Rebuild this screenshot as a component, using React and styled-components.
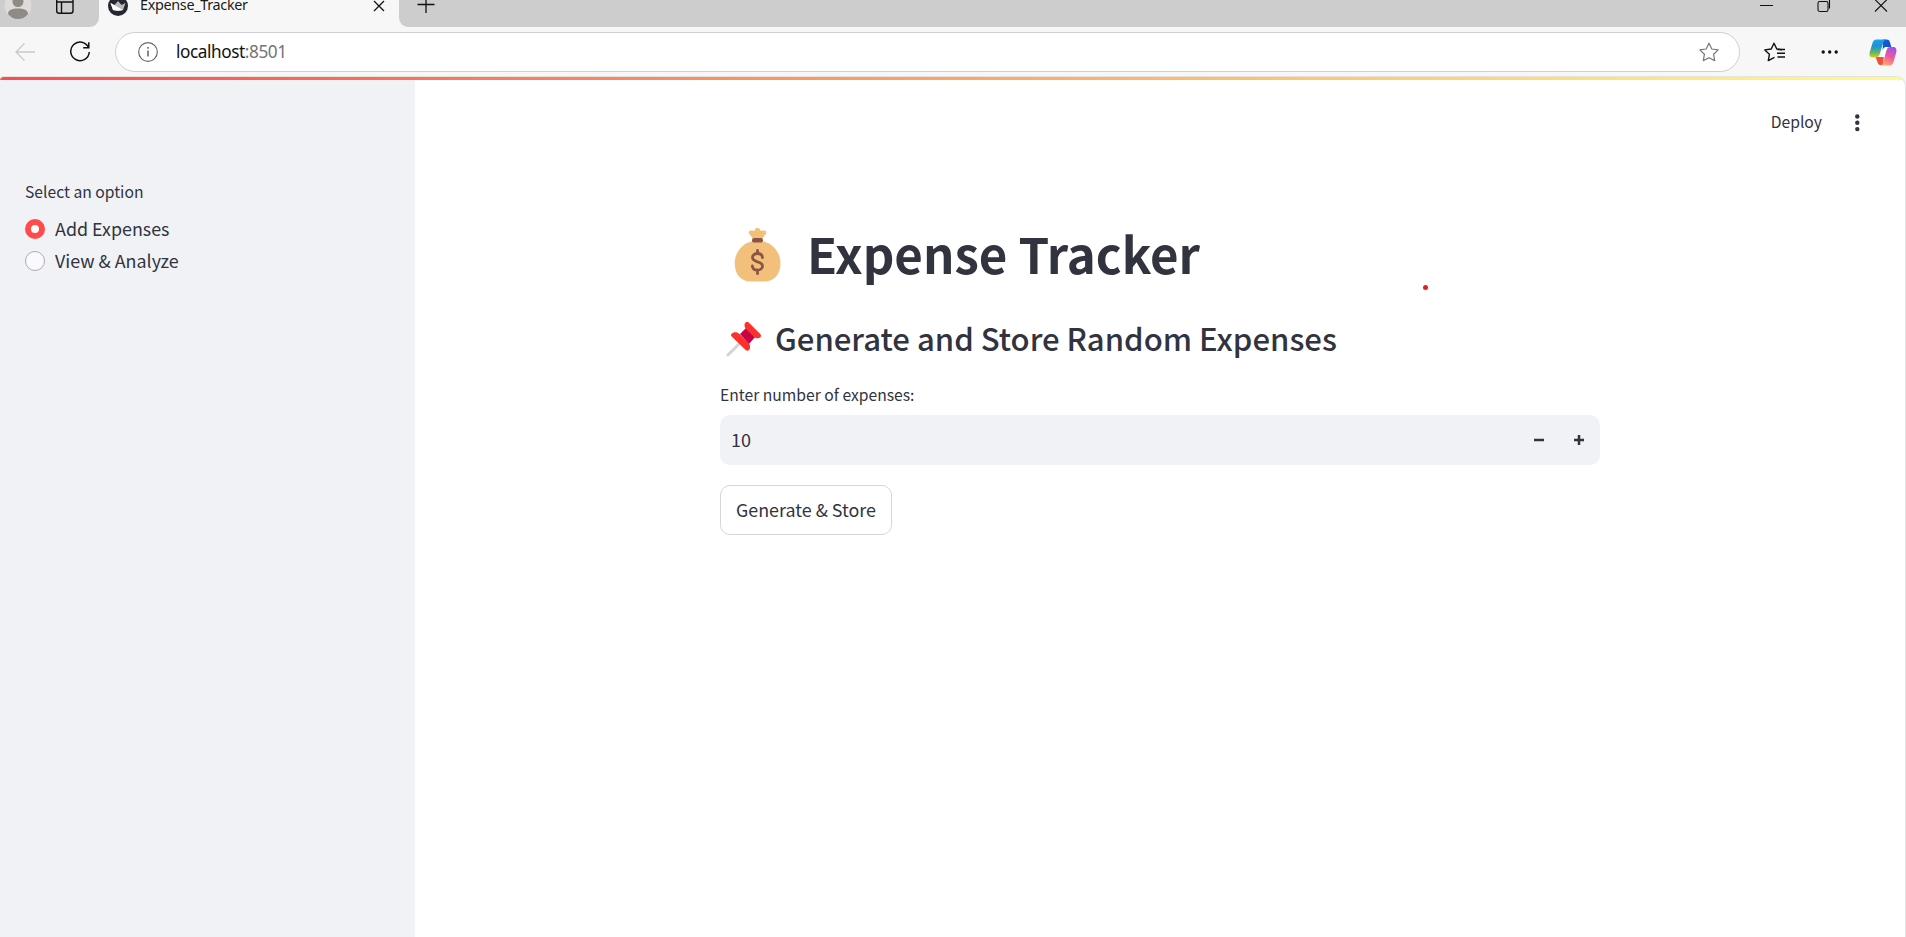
import React from 'react';
import styled, { createGlobalStyle } from 'styled-components';

const Global = createGlobalStyle`
  *, *::before, *::after { box-sizing: border-box; }
  body { margin: 0; background: #f7f7f7; overflow: hidden; }
  svg { display: block; flex: none; }
  h1, h2, p { margin: 0; }
  button { font: inherit; color: inherit; background: none; border: 0; padding: 0; }
`;

const ink = '#31333f';

const Window = styled.div`
  height: 937px;
  display: flex;
  flex-direction: column;
  color: ${ink};
  font-family: 'Noto Sans CJK SC', 'Open Sans', sans-serif;
`;

const TabStrip = styled.div`
  height: 27px;
  display: flex;
  overflow: hidden;
  color: #111;
`;

const StripStart = styled.div`
  width: 99px;
  background: #cdcdcd;
  border-bottom-right-radius: 9px;
  display: flex;
  align-items: flex-start;
`;

const Tab = styled.div`
  width: 300px;
  padding: 0 14px 0 9px;
  display: flex;
  align-items: flex-start;
`;

const TabTitle = styled.span`
  flex: 1;
  margin-left: 12px;
  margin-top: -8px;
  font: 14.4px/26px 'Noto Sans', sans-serif;
  letter-spacing: -0.32px;
  color: #1b1b1b;
`;

const StripEnd = styled.div`
  flex: 1;
  background: #cdcdcd;
  border-bottom-left-radius: 9px;
  padding: 0 18px 0 18px;
  display: flex;
  justify-content: space-between;
`;

const WindowControls = styled.div`
  display: flex;
  gap: 43.5px;
`;

const Toolbar = styled.div`
  height: 50px;
  padding: 5px 8px 5px 14px;
  display: flex;
  align-items: center;
`;

const AddressBar = styled.div`
  width: 1625px;
  height: 40px;
  margin: 0 24px 0 24px;
  padding: 0 20px 0 22px;
  border: 1px solid #cfcfcf;
  border-radius: 20px;
  background: #fff;
  display: flex;
  align-items: center;
`;

const Url = styled.span`
  flex: 1;
  margin-left: 18px;
  font: 17.2px/24px 'Noto Sans', sans-serif;
  letter-spacing: -0.42px;
  color: #111;
`;

const Port = styled.span`
  color: #757575;
`;

const ToolbarGroup = styled.div`
  display: flex;
  align-items: center;
  gap: ${(p) => p.$gap}px;
`;

const Viewport = styled.div`
  flex: 1;
  margin-right: 1px;
  border-radius: 4px 9px 0 0;
  overflow: hidden;
  background: #fff;
  box-shadow: 0 0 0 1px #e3e3e3;
  display: flex;
  flex-direction: column;
`;

const Decoration = styled.div`
  height: 3px;
  background: linear-gradient(90deg, #ff4b4b, #fffd80);
`;

const Page = styled.div`
  flex: 1;
  display: flex;
`;

const Sidebar = styled.aside`
  width: 415px;
  padding: 99px 25px 0;
  background: #f0f2f6;
`;

const Label = styled.div`
  font-size: 15.68px;
  line-height: 26px;
`;

const RadioList = styled.div`
  margin-top: 8px;
  display: flex;
  flex-direction: column;
`;

const RadioRow = styled.label`
  height: 32px;
  display: flex;
  align-items: center;
  gap: 10px;
  font-size: 17.9px;
  line-height: 30px;
`;

const RadioText = styled.span`
  height: 32px;
`;

const RadioDot = styled.span`
  width: 20px;
  height: 20px;
  border-radius: 50%;
  background: ${(p) => (p.$checked ? '#fff' : '#fafafc')};
  border: ${(p) => (p.$checked ? '6px solid #ff4b4b' : '1px solid #a9abb2')};
`;

const Main = styled.main`
  flex: 1;
  display: flex;
  flex-direction: column;
`;

const AppHeader = styled.header`
  height: 85px;
  padding: 0 45px 0 0;
  display: flex;
  justify-content: flex-end;
  align-items: center;
  gap: 32px;
  font-size: 15.7px;
`;

const DeployLink = styled.span`
  padding-bottom: 2px;
`;

const Content = styled.section`
  width: 880px;
  margin-left: 305px;
  margin-top: 54px;
`;

const Title = styled.h1`
  height: 72px;
  display: flex;
  align-items: center;
  gap: 25px;
  padding-left: 14px;
  font-size: 49.2px;
  line-height: 68px;
  font-weight: 700;
`;

const TitleText = styled.span`
  height: 72px;
`;

const Subtitle = styled.h2`
  height: 50px;
  margin-top: 23px;
  display: flex;
  align-items: center;
  gap: 13px;
  padding-left: 6px;
  font-size: 31.08px;
  line-height: 48px;
  font-weight: 500;
  white-space: nowrap;
`;

const SubtitleText = styled.span`
  height: 50px;
`;

const FieldLabel = styled(Label)`
  margin-top: 18px;
`;

const NumberField = styled.div`
  height: 50px;
  margin-top: 7px;
  padding: 0 15px 0 11px;
  border-radius: 10px;
  background: #f0f2f6;
  display: flex;
  align-items: center;
  gap: 28px;
  font-size: 18px;
`;

const NumberValue = styled.span`
  flex: 1;
  height: 50px;
  line-height: 48px;
`;

const ActionButton = styled.button`
  && {
    width: 172px;
    height: 50px;
    margin-top: 20px;
    padding-bottom: 2px;
    border: 1px solid #d6d6d9;
    border-radius: 10px;
    background: #fff;
    font-size: 17.9px;
    white-space: nowrap;
  }
`;

const PointerDot = styled.span`
  position: absolute;
  left: 1423px;
  top: 285px;
  width: 5px;
  height: 5px;
  border-radius: 50%;
  background: #ea1c1c;
`;

const Avatar = () => (
  <svg width="36" height="27" viewBox="0 0 36 27">
    <circle cx="18" cy="5.500" r="13.500" fill="#dedbd8" />
    <circle cx="18" cy="1.500" r="5.500" fill="#8f8a86" />
    <path d="M8 14c0-4 4-5.500 10-5.500s10 1.500 10 5.500c-2 3-6 5-10 5s-8-2-10-5z" fill="#8f8a86" />
  </svg>
);

const TabActions = () => (
  <svg width="40" height="27" viewBox="0 0 40 27" fill="none" stroke="#111" strokeWidth="1.400">
    <rect x="20.700" y="-4" width="16.300" height="17.300" rx="2.500" />
    <path d="M21 2h16M25.500 2v11" />
  </svg>
);

const Crown = () => (
  <svg width="20" height="18" viewBox="0 0 20 18">
    <circle cx="10" cy="6" r="10" fill="#262730" />
    <path d="M2.500 3l4 2L10 1l3.500 4 4-2-2.500 7q-5 1.500-10 0z" fill="#b9b9bb" />
    <path d="M2.500 3L15 10q-5 1.500-10 0z" fill="#fff" />
  </svg>
);

const TabClose = () => (
  <svg width="12" height="14" viewBox="0 0 12 14" fill="none" stroke="#111" strokeWidth="1.300">
    <path d="M1 1l10 10M11 1L1 11" />
  </svg>
);

const Plus = () => (
  <svg width="18" height="14" viewBox="0 0 18 14" stroke="#111" strokeWidth="1.300">
    <path d="M.5 4.500h17M9 -4v17" />
  </svg>
);

const Minimize = () => (
  <svg width="13" height="14" viewBox="0 0 13 14" stroke="#111" strokeWidth="1">
    <path d="M0 5.500h13" />
  </svg>
);

const Restore = () => (
  <svg width="14" height="14" viewBox="0 0 14 14" fill="none" stroke="#111" strokeWidth="1.100">
    <rect x="1" y="1.500" width="10" height="10" rx="1.800" />
    <path d="M3 -1.500h7.500a2 2 0 0 1 2 2v8" />
  </svg>
);

const WindowClose = () => (
  <svg width="14" height="14" viewBox="0 0 14 14" stroke="#111" strokeWidth="1.100">
    <path d="M1 -.5l12 12M13 -.5l-12 12" />
  </svg>
);

const Back = () => (
  <svg width="22" height="20" viewBox="0 0 22 20" fill="none" stroke="#c9c9c9" strokeWidth="1.300">
    <path d="M10.500 1.500L2 10l8.500 8.500M2 10h19" />
  </svg>
);

const Reload = () => (
  <svg width="22" height="22" viewBox="0 0 22 22" fill="none" stroke="#111" strokeWidth="1.500">
    <path d="M19.500 6.500A9.300 9.300 0 1 0 20.300 11M19.800 1.200v5.600h-5.600" />
  </svg>
);

const Info = () => (
  <svg width="20" height="20" viewBox="0 0 20 20" fill="none" stroke="#6b6b6b" strokeWidth="1.200">
    <circle cx="10" cy="10" r="9.300" />
    <path d="M10 8.500v6M10 5v1.700" strokeWidth="1.600" />
  </svg>
);

const Star = () => (
  <svg width="20" height="20" viewBox="0 0 20 20" fill="none" stroke="#777" strokeWidth="1.200" strokeLinejoin="round">
    <path d="M10 1.200l2.800 5.800 6.400.9-4.600 4.400 1.100 6.300L10 15.700l-5.700 2.900 1.100-6.300L.8 7.900 7.200 7z" />
  </svg>
);

const Favorites = () => (
  <svg width="22" height="20" viewBox="0 0 22 20" fill="none" stroke="#111" strokeWidth="1.400" strokeLinejoin="round">
    <path d="M18 7.700L12.800 7 10 1.200 7.200 7 .8 7.900l4.600 4.400-1.100 6.300 6.200-3.200" />
    <path d="M13.500 7.500h7.500M13 11.300h8M13.500 15h7.500" />
  </svg>
);

const More = () => (
  <svg width="20" height="4" viewBox="0 0 20 4" fill="#111">
    <circle cx="5.200" cy="2" r="1.700" />
    <circle cx="11.700" cy="2" r="1.700" />
    <circle cx="18.200" cy="2" r="1.700" />
  </svg>
);

const Copilot = () => (
  <svg width="28" height="27" viewBox="0 0 28 27">
    <defs>
      <linearGradient id="cpLeft" x1="0" y1="0" x2="0" y2="1">
        <stop offset="0" stopColor="#18a5ef" />
        <stop offset=".35" stopColor="#1b91d8" />
        <stop offset=".72" stopColor="#5db865" />
        <stop offset="1" stopColor="#edc90d" />
      </linearGradient>
      <linearGradient id="cpRight" x1=".7" y1="0" x2=".3" y2="1">
        <stop offset="0" stopColor="#a052ea" />
        <stop offset=".5" stopColor="#ed5c9a" />
        <stop offset="1" stopColor="#ffac67" />
      </linearGradient>
      <linearGradient id="cpTop" x1="0" y1="0" x2="1" y2="1">
        <stop offset="0" stopColor="#0b66da" />
        <stop offset="1" stopColor="#2143c5" />
      </linearGradient>
    </defs>
    <path d="M14 .5h3.500c2.500 0 3 1 3.700 3.500l1 4h-4c-3 0-3.700 1.500-4.500 4z" fill="url(#cpTop)" />
    <path d="M6.500 18h5.500c2 0 2.500-1 3-3l-1 11h-2.500c-2 0-2.700-1.500-3.200-3.500z" fill="#ee5139" />
    <path d="M7.500 .5h10c-2.300 0-3 2-3.600 4l-3 10c-.8 2.500-1.800 4-4.400 4H3.700C.8 18.500 0 16 .8 13L3.500 4C4.300 1.700 5.300 .5 7.500 .5z" fill="url(#cpLeft)" />
    <path d="M20.500 26.500h-9.800c2.300 0 3-1.800 3.600-3.800L17.200 12c.8-2.500 1.800-4 4.400-4h2.700c2.900 0 3.700 2.500 2.900 5.500l-2.700 9.500c-.8 2.300-1.800 3.500-4 3.500z" fill="url(#cpRight)" />
    <path d="M13.800 11c.8-2.300 1.700-3 3.700-3h1.500c-1 .8-1.500 2.300-1.900 3.700L15.200 18h-3.900z" fill="#fff" />
  </svg>
);

const Kebab = () => (
  <svg width="6" height="18" viewBox="0 0 6 18" fill={ink}>
    <circle cx="3.300" cy="2.500" r="2.200" />
    <circle cx="3.300" cy="8.800" r="2.200" />
    <circle cx="3.300" cy="15.100" r="2.200" />
  </svg>
);

const MoneyBag = () => (
  <svg width="48" height="56" viewBox="0 0 48 56">
    <path d="M19 12l-4-5.500c-1-2 .5-3.500 2.500-3l3 .3C21 1.500 22 .7 23.500.7s2.500.8 3 3.100l3-.3c2-.5 3.500 1 2.500 3L28 12z" fill="#f3c07b" />
    <path d="M17 14.500h13C40 17 46.500 27 46.500 36c0 12-7 18.500-16 18.500h-14C7.500 54.500.7 48 .7 36 .7 27 7 17 17 14.500z" fill="#f3c07b" />
    <rect x="18" y="11" width="11" height="4.600" rx="2.200" fill="#8c5543" />
    <path d="M28.500 30.500c-.3-3-2.200-4-5-4s-5 1.500-5 4.100c0 5.600 10 2.800 10 8.300 0 2.700-2.200 4.200-5 4.200s-5-1.400-5.200-4.200M23.500 23.500v3M23.500 43v3.700" fill="none" stroke="#8c5543" strokeWidth="2.800" strokeLinecap="round" />
  </svg>
);

const Pushpin = () => (
  <svg width="36" height="36" viewBox="0 0 36 36">
    <path d="M2 34L14 22" stroke="#d3d3d3" strokeWidth="3" strokeLinecap="round" />
    <path d="M14 13L21 6l9 9-7 8z" fill="#c90044" />
    <path d="M19.500 1.500c1.300-1.300 2.500-.7 3.500.3L34.200 13c1.200 1.200 1 2.500.2 3.200-1.800 1.800-4.700 1.300-6.600-.5L20.500 8.500c-2-2-2.700-5.200-1-7z" fill="#fb312c" />
    <path d="M6 12.500c2-2 5.500-1.500 7.500.5l8.700 8.500c2 2 2.800 5.500.8 7.500-1.200 1.200-2.600.7-3.600-.3L5.700 15.500c-1-1-.9-2.200.3-3z" fill="#fb312c" />
  </svg>
);

const StepMinus = () => (
  <svg width="12" height="12" viewBox="0 0 12 12" stroke={ink} strokeWidth="2.500">
    <path d="M1 6h10" />
  </svg>
);

const StepPlus = () => (
  <svg width="12" height="12" viewBox="0 0 12 12" stroke={ink} strokeWidth="2.500">
    <path d="M1 6h10M6 1v10" />
  </svg>
);

export default function App() {
  return (
    <Window>
      <Global />
      <TabStrip>
        <StripStart><Avatar /><TabActions /></StripStart>
        <Tab>
          <Crown />
          <TabTitle>Expense_Tracker</TabTitle>
          <TabClose />
        </Tab>
        <StripEnd>
          <Plus />
          <WindowControls><Minimize /><Restore /><WindowClose /></WindowControls>
        </StripEnd>
      </TabStrip>
      <Toolbar>
        <ToolbarGroup $gap={33}><Back /><Reload /></ToolbarGroup>
        <AddressBar>
          <Info />
          <Url>localhost<Port>:8501</Port></Url>
          <Star />
        </AddressBar>
        <ToolbarGroup $gap={31.5}><Favorites /><More /><Copilot /></ToolbarGroup>
      </Toolbar>
      <Viewport>
        <Decoration />
        <Page>
          <Sidebar>
            <Label>Select an option</Label>
            <RadioList>
              <RadioRow><RadioDot $checked /><RadioText>Add Expenses</RadioText></RadioRow>
              <RadioRow><RadioDot /><RadioText>View &amp; Analyze</RadioText></RadioRow>
            </RadioList>
          </Sidebar>
          <Main>
            <AppHeader><DeployLink>Deploy</DeployLink><Kebab /></AppHeader>
            <Content>
              <Title><MoneyBag /><TitleText>Expense Tracker</TitleText></Title>
              <Subtitle><Pushpin /><SubtitleText>Generate and Store Random Expenses</SubtitleText></Subtitle>
              <FieldLabel>Enter number of expenses:</FieldLabel>
              <NumberField>
                <NumberValue>10</NumberValue>
                <StepMinus />
                <StepPlus />
              </NumberField>
              <ActionButton>Generate &amp; Store</ActionButton>
            </Content>
          </Main>
        </Page>
      </Viewport>
      <PointerDot />
    </Window>
  );
}
